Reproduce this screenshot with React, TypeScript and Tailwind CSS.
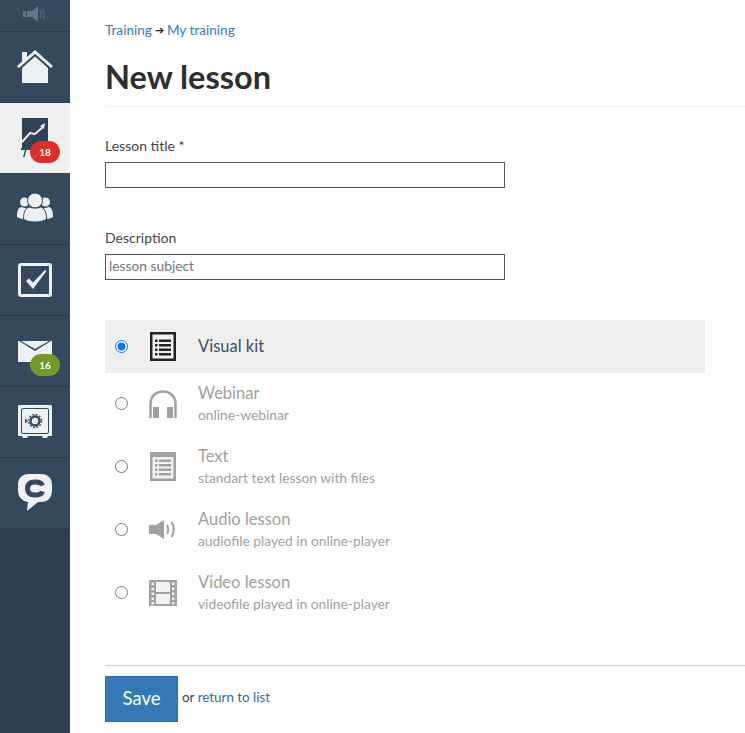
import type { ReactNode } from "react";

function SpeakerTop() {
  return (
    <svg width="24" height="16" viewBox="0 0 24 16" fill="#5c7690">
      <rect x="0" y="5" width="3" height="6" />
      <path d="M4 5h5l6-5v16l-6-5H4z" />
      <path d="M17 4c1.500 2 1.500 6 0 8M19.500 2.500c2.200 3 2.200 8 0 11" fill="none" stroke="#5c7690" strokeWidth="1" />
    </svg>
  );
}

function HomeIcon() {
  return (
    <svg width="36" height="34" viewBox="0 0 36 34">
      <path d="M5 13V2h5v5.500z" fill="#eef1f3" />
      <path d="M1 17 18 2l17 15" fill="none" stroke="#eef1f3" strokeWidth="3" />
      <path d="M5 18 18 6.500 31 18v15H5z" fill="#eef1f3" />
    </svg>
  );
}

function ChartIcon() {
  return (
    <svg width="28" height="40" viewBox="0 0 28 40">
      <rect x="1" y="0" width="26" height="31" fill="#2f4256" />
      <path d="M1 24 9 15l5 1 8-7" fill="none" stroke="#eef1f3" strokeWidth="2" />
      <path d="m19 8 5-3-1 6z" fill="#eef1f3" />
      <rect x="0" y="30" width="20" height="2" fill="#2f4256" />
      <path d="m4 32-2 7h1.500l2-7z" fill="#2f4256" />
    </svg>
  );
}

function GroupIcon() {
  return (
    <svg width="36" height="31" viewBox="0 0 36 31" fill="#eef1f3">
      <circle cx="7.500" cy="9" r="4.500" />
      <circle cx="28.500" cy="9" r="4.500" />
      <path d="M0 24c0-6 1-9 4-10 3 1 5 1 5 1l-2 11c-3 0-5-1-7-2zM36 24c0-6-1-9-4-10-3 1-5 1-5 1l2 11c3 0 5-1 7-2z" />
      <circle cx="18" cy="7.500" r="7.500" stroke="#34495e" strokeWidth="1" />
      <path d="M6.500 26c0-7 2-11 6-12 3 1.500 8 1.500 11 0 4 1 6 5 6 12-4 4-19 4-23 0z" stroke="#34495e" strokeWidth="1" />
    </svg>
  );
}

function CheckIcon() {
  return (
    <svg width="34" height="34" viewBox="0 0 34 34">
      <rect x="1.500" y="1.500" width="31" height="31" rx="1.500" fill="none" stroke="#eef1f3" strokeWidth="3" />
      <path d="m8 18 3-2.500 4 4L27 7l1.500 1L15 26z" fill="#eef1f3" />
    </svg>
  );
}

function MailIcon() {
  return (
    <svg width="34" height="21" viewBox="0 0 34 21" fill="#eef1f3">
      <path d="M0 0h1l16 10L33 0h1v21H0z" />
      <path d="M3 0h28L17 8z" />
    </svg>
  );
}

function SafeIcon() {
  return (
    <svg width="34" height="34" viewBox="0 0 34 34">
      <path d="M1.500 0h31A1.500 1.500 0 0 1 34 1.500V31h-4l-1 2h-4l-1-2H10l-1 2H5l-1-2H0V1.500A1.500 1.500 0 0 1 1.500 0z" fill="#eef1f3" />
      <rect x="3.500" y="3.500" width="27" height="25" rx="1.500" fill="none" stroke="#34495e" strokeWidth="1" />
      <circle cx="17" cy="16" r="4.500" fill="none" stroke="#34495e" strokeWidth="2.500" />
      <circle cx="17" cy="16" r="6.500" fill="none" stroke="#34495e" strokeWidth="1.500" strokeDasharray="1.700 1.700" />
      <path d="M7 13.500 10 16l-3 2.500z" fill="#34495e" />
    </svg>
  );
}

function ChatIcon() {
  return (
    <svg width="34" height="38" viewBox="0 0 34 38">
      <path d="M11 0h12c7 0 11 4 11 11v5c0 8-4 12-11 12h-3l-11 9 1-9C4 27 0 23 0 16v-5C0 4 4 0 11 0z" fill="#f0f1f3" />
      <path d="M24.500 11.500C23.500 8.500 20.500 8 17 8c-4.500 0-7.500 2-7.500 6.500S12.500 21 17 21c3.500 0 6.500-.5 7.500-3.500" fill="none" stroke="#34495e" strokeWidth="5" />
    </svg>
  );
}

function ListIcon({ dark }: { dark?: boolean }) {
  const color = dark ? "#222" : "#a1a1a1";
  return (
    <svg width="26" height="29" viewBox="0 0 26 29">
      <rect width="26" height="29" fill={color} />
      <rect x="2.500" y={dark ? 2.500 : 5} width="21" height={dark ? 24 : 21.500} fill="#f2f2f2" />
      {[7.500, 12, 16.500, 21].map((y) => (
        <g key={y} fill={color}>
          <rect x="5" y={y} width="2.500" height="2.500" />
          <rect x="9" y={y} width="12" height="2.500" />
        </g>
      ))}
    </svg>
  );
}

function HeadphonesIcon() {
  return (
    <svg width="28" height="28" viewBox="0 0 28 28">
      <path d="M1.500 28V14C1.500 6 7 1.500 14 1.500S26.500 6 26.500 14v14" fill="none" stroke="#a1a1a1" strokeWidth="2.500" />
      <rect x="4" y="17" width="6" height="11" fill="#a1a1a1" />
      <rect x="18" y="17" width="6" height="11" fill="#a1a1a1" />
    </svg>
  );
}

function AudioIcon() {
  return (
    <svg width="28" height="19" viewBox="0 0 28 19">
      <path d="M0 5h7l8-5v19l-8-5H0z" fill="#a1a1a1" />
      <path d="M18 5c1.500 3 1.500 6 0 9M22.500 2c3 5 3 10 0 15" fill="none" stroke="#a1a1a1" strokeWidth="2" />
    </svg>
  );
}

function FilmIcon() {
  return (
    <svg width="28" height="26" viewBox="0 0 28 26">
      <rect width="28" height="26" fill="#a1a1a1" />
      <rect x="7" y="2" width="14" height="10" fill="#f2f2f2" />
      <rect x="7" y="14" width="14" height="10" fill="#f2f2f2" />
      {[2.500, 7.500, 12.500, 17.500, 22].map((y) => (
        <g key={y} fill="#f2f2f2">
          <rect x="2.500" y={y} width="2.500" height="2.500" />
          <rect x="23" y={y} width="2.500" height="2.500" />
        </g>
      ))}
    </svg>
  );
}

const NAV: { icon: ReactNode; height: string; active?: boolean; badge?: string; badgeColor?: string }[] = [
  { icon: <HomeIcon />, height: "h-[71px]" },
  { icon: <ChartIcon />, height: "h-[70px]", active: true, badge: "18", badgeColor: "bg-[#d9302c]" },
  { icon: <GroupIcon />, height: "h-[72px]" },
  { icon: <CheckIcon />, height: "h-[71px]" },
  { icon: <MailIcon />, height: "h-[71px]", badge: "16", badgeColor: "bg-[#73992b]" },
  { icon: <SafeIcon />, height: "h-[71px]" },
  { icon: <ChatIcon />, height: "h-[71px]" },
];

const OPTIONS: { title: string; sub: string; icon: ReactNode }[] = [
  { title: "Webinar", sub: "online-webinar", icon: <HeadphonesIcon /> },
  { title: "Text", sub: "standart text lesson with files", icon: <ListIcon /> },
  { title: "Audio lesson", sub: "audiofile played in online-player", icon: <AudioIcon /> },
  { title: "Video lesson", sub: "videofile played in online-player", icon: <FilmIcon /> },
];

export default function App() {
  return (
    <div className="flex h-[733px] w-[745px] overflow-hidden bg-white font-['Lato','Open_Sans',sans-serif] text-[#444]">
      {/* Sidebar */}
      <aside className="flex w-[70px] shrink-0 flex-col bg-[#2c3e50]">
        <div className="flex h-[32px] items-center justify-center border-b border-[#2b3b4c] bg-[#34495e] pb-1">
          <SpeakerTop />
        </div>
        {NAV.map((item, i) => (
          <div
            key={i}
            className={`relative flex items-center justify-center ${item.height} ${
              item.active ? "bg-[#f0f0f0]" : "border-b border-[#2b3b4c] bg-[#34495e]"
            }`}
          >
            {item.icon}
            {item.badge && (
              <span
                className={`absolute left-[30px] top-[38px] flex h-[22px] w-[30px] items-center justify-center rounded-full text-[10px] font-bold text-white ${item.badgeColor}`}
              >
                {item.badge}
              </span>
            )}
          </div>
        ))}
      </aside>

      {/* Main */}
      <main className="flex-1 pl-[35px]">
        <div className="mt-[20px] flex h-[20px] items-center gap-[3px] text-[13.6px] text-[#337ab7]">
          <span>Training</span>
          <span className="text-[11px] text-[#222]">➔</span>
          <span>My training</span>
        </div>
        <h1 className="mt-[16px] border-b border-[#eee] pb-[8px] text-[32.5px] font-bold leading-[42px] text-[#2e2e2e]">
          New lesson
        </h1>

        <label className="mt-[30px] block text-[14px] leading-[18px]">Lesson title *</label>
        <input className="mt-[7px] block h-[26px] w-[400px] border border-[#555] bg-white px-1 text-[14px]" />

        <label className="mt-[41px] block text-[14px] leading-[18px]">Description</label>
        <input
          className="mt-[7px] block h-[26px] w-[400px] border border-[#555] bg-white px-[3px] pb-[3px] text-[13.8px] placeholder:text-[#757575]"
          placeholder="lesson subject"
        />

        <div className="mt-[40px] w-[600px]">
          <div className="flex h-[53px] items-center bg-[#efefef] pb-[1px] text-[#3a4f64]">
            <input type="radio" defaultChecked className="ml-[10px] h-[13px] w-[13px]" />
            <div className="ml-[20px] flex w-[30px] justify-center">
              <ListIcon dark />
            </div>
            <span className="ml-[20px] text-[16.5px]">Visual kit</span>
          </div>
          {OPTIONS.map((opt) => (
            <div key={opt.title} className="flex h-[63px] items-center pb-[2px] text-[#a0a0a0]">
              <input type="radio" className="ml-[10px] h-[13px] w-[13px]" />
              <div className="ml-[20px] flex w-[30px] justify-center">{opt.icon}</div>
              <div className="ml-[20px]">
                <div className="text-[16.5px] leading-[22px]">{opt.title}</div>
                <div className="text-[13.8px] leading-[22px]">{opt.sub}</div>
              </div>
            </div>
          ))}
        </div>

        <div className="mt-[40px] flex border-t border-[#ccc] pt-[10px]">
          <button className="h-[46px] w-[73px] border border-[#2e6da4] bg-[#337ab7] text-[18.5px] text-white">
            Save
          </button>
          <span className="ml-[4px] mt-[12px] text-[13.4px] leading-[18px] text-[#444]">
            or <span className="text-[#2f6a9e]">return to list</span>
          </span>
        </div>
      </main>
    </div>
  );
}
